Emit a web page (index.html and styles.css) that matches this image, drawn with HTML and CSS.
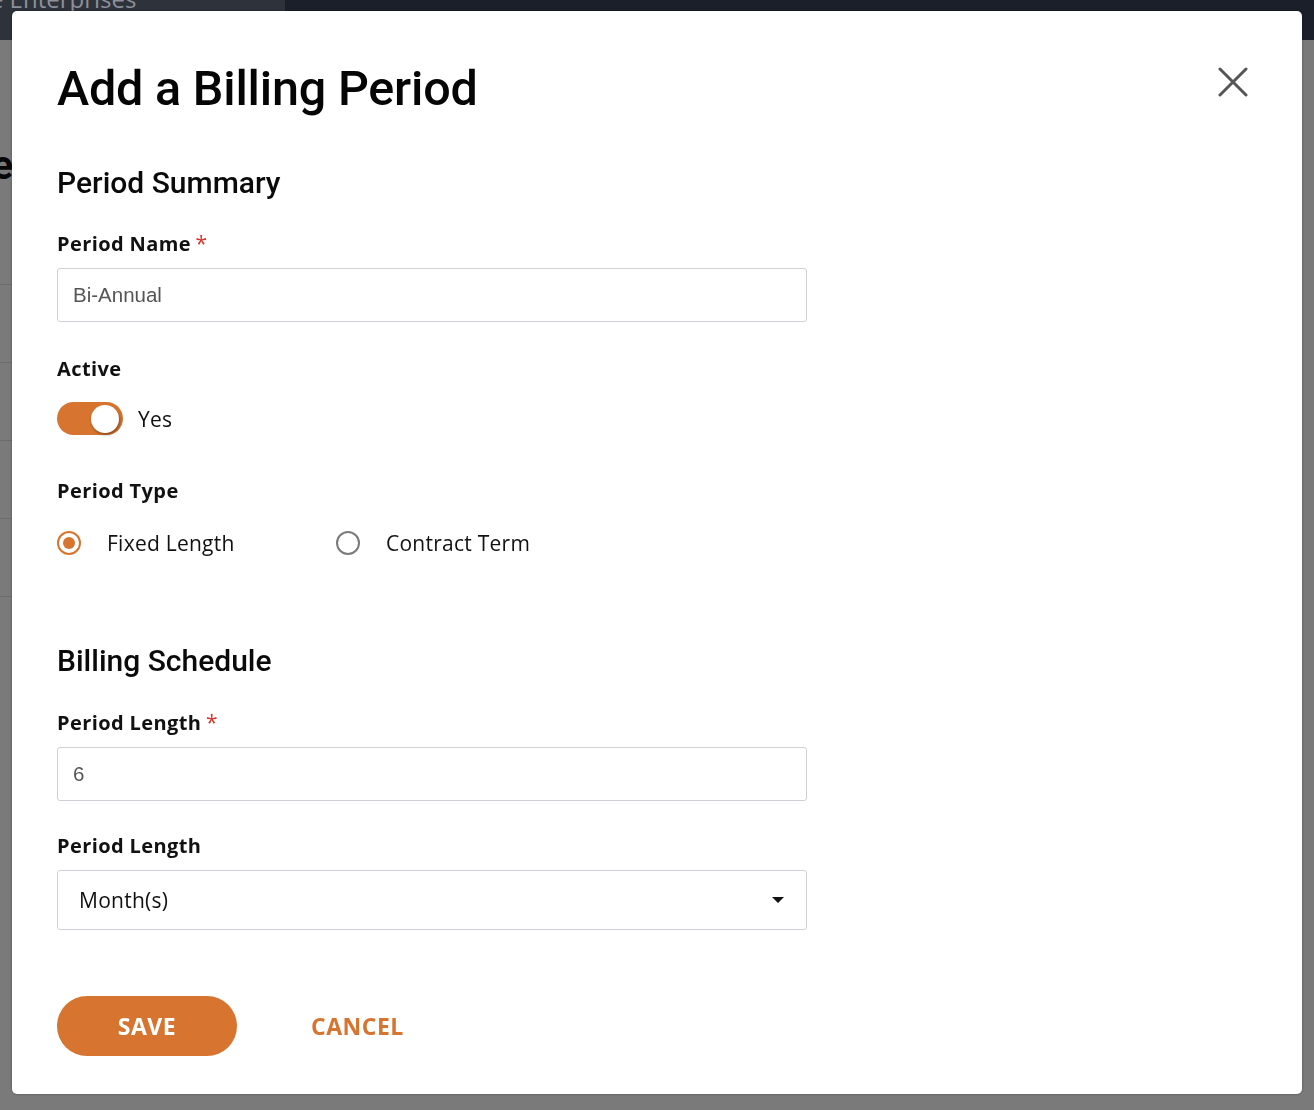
FILE: index.html
```html
<!DOCTYPE html>
<html lang="en">
<head>
<meta charset="utf-8">
<title>Add a Billing Period</title>
<link rel="stylesheet" href="styles.css">
</head>
<body>
<div class="page">
  <header class="topbar">
    <div class="brand"><span class="brand-text">Acme Enterprises</span></div>
  </header>
  <div class="strip">
    <div class="strip-title"><span>Billing Schedule</span></div>
    <div class="strip-rows">
      <div class="strip-row"></div>
      <div class="strip-row"></div>
      <div class="strip-row"></div>
      <div class="strip-row"></div>
      <div class="strip-row"></div>
    </div>
  </div>
</div>

<div class="overlay"></div>

<div class="modal" role="dialog" aria-labelledby="modal-title">
  <div class="modal-head">
    <h1 id="modal-title" class="modal-title">Add a Billing Period</h1>
    <button class="close" aria-label="Close">
      <svg width="30" height="30" viewBox="0 0 30 30"><path d="M2 2 L28 28 M28 2 L2 28" stroke="#555" stroke-width="3" stroke-linecap="round"/></svg>
    </button>
  </div>

  <h2 class="section-title">Period Summary</h2>

  <label class="label label-first">Period Name <span class="req">*</span></label>
  <div class="input"><span class="input-text">Bi-Annual</span></div>

  <label class="label label-gap">Active</label>
  <div class="toggle-row">
    <span class="toggle"><span class="knob"></span></span>
    <span class="option-text">Yes</span>
  </div>

  <label class="label label-type">Period Type</label>
  <div class="radio-row">
    <span class="radio-item">
      <span class="radio radio-on"><span class="dot"></span></span>
      <span class="option-text">Fixed Length</span>
    </span>
    <span class="radio-item">
      <span class="radio"></span>
      <span class="option-text">Contract Term</span>
    </span>
  </div>

  <h2 class="section-title section-second">Billing Schedule</h2>

  <label class="label label-second">Period Length <span class="req">*</span></label>
  <div class="input"><span class="input-text">6</span></div>

  <label class="label label-select">Period Length</label>
  <div class="select">
    <span class="select-text">Month(s)</span>
    <span class="caret"></span>
  </div>

  <div class="actions">
    <button class="btn-save">SAVE</button>
    <button class="btn-cancel">CANCEL</button>
  </div>
</div>
</body>
</html>
```

FILE: styles.css
```css
html, body {
  margin: 0;
  padding: 0;
  height: 100%;
}
body {
  background: #ffffff;
  font-family: "Open Sans", "Liberation Sans", sans-serif;
  overflow: hidden;
}

/* background page */
.page {
  height: 1110px;
}
.topbar {
  height: 40px;
  background: #1b1f29;
  display: flex;
}
.brand {
  width: 285px;
  background: #2d323b;
  border-bottom-right-radius: 2px;
  overflow: hidden;
  position: relative;
}
.brand-text {
  position: absolute;
  left: -59px;
  top: -18px;
  font-size: 24px;
  color: #8d9099;
  white-space: nowrap;
}
.strip {
  width: 12px;
  overflow: hidden;
  background: #fff;
  height: 1070px;
}
.strip-title {
  display: flex;
  justify-content: flex-end;
  margin-top: 102px;
  height: 50px;
}
.strip-title span {
  font-family: "Roboto", sans-serif;
  font-weight: 700;
  font-size: 40px;
  color: #111;
  white-space: nowrap;
  flex-shrink: 0;
  margin-right: -1px;
}
.strip-rows {
  margin-top: 92px;
}
.strip-row {
  height: 77px;
  border-top: 1px solid #e2e2e2;
}

.overlay {
  position: fixed;
  inset: 40px 0 0 0;
  background: rgba(0, 0, 0, 0.52);
}

/* modal */
.modal {
  position: fixed;
  left: 12px;
  top: 11px;
  width: 1290px;
  height: 1083px;
  box-sizing: border-box;
  background: #fff;
  border-radius: 5px;
  box-shadow: 0 0 3px rgba(0, 0, 0, 0.35);
  padding: 50px 45px 0 45px;
  display: flex;
  flex-direction: column;
  align-items: flex-start;
}
.modal-head {
  align-self: stretch;
  display: flex;
  justify-content: space-between;
  align-items: flex-start;
}
.modal-title {
  margin: 0;
  font-family: "Roboto", sans-serif;
  font-weight: 500;
  font-size: 48.5px;
  line-height: 56px;
  color: #050505;
  letter-spacing: -0.2px;
}
.close {
  border: 0;
  background: none;
  padding: 0;
  margin: 6px 9px 0 0;
  width: 30px;
  height: 30px;
  display: block;
}
.close svg { display: block; }

.section-title {
  margin: 48px 0 0 0;
  font-family: "Roboto", sans-serif;
  font-weight: 500;
  font-size: 30px;
  line-height: 36px;
  color: #0a0a0a;
}
.section-second {
  margin-top: 86px;
}

.label {
  display: block;
  font-family: "Open Sans", sans-serif;
  font-weight: 700;
  font-size: 20px;
  line-height: 28px;
  letter-spacing: 0.4px;
  color: #111;
}
.label-first { margin-top: 28px; }
.label-second { margin-top: 29px; }
.label-gap { margin-top: 33px; }
.label-select { margin-top: 31px; }
.label-type { margin-top: 42px; }
.req {
  color: #d9342b;
  font-weight: 400;
  font-size: 21px;
  margin-left: -1px;
  letter-spacing: 0;
}

.input {
  margin-top: 10px;
  width: 750px;
  height: 54px;
  box-sizing: border-box;
  border: 1px solid #cfcfd6;
  border-radius: 3px;
  display: flex;
  align-items: center;
  padding: 0 15px;
}
.input-text {
  font-family: "Liberation Sans", Arial, sans-serif;
  font-size: 20.5px;
  color: #555;
}

.toggle-row {
  margin-top: 19px;
  display: flex;
  align-items: center;
  gap: 15px;
}
.toggle {
  width: 66px;
  height: 33px;
  border-radius: 17px;
  background: #d77430;
  display: flex;
  align-items: center;
  justify-content: flex-end;
  padding-right: 4px;
  box-sizing: border-box;
}
.knob {
  width: 28px;
  height: 28px;
  border-radius: 50%;
  background: #fff;
  box-shadow: 1px 2px 3px rgba(0, 0, 0, 0.35);
}
.option-text {
  font-family: "Open Sans", sans-serif;
  font-size: 21px;
  line-height: 28px;
  letter-spacing: 0.25px;
  color: #111;
}

.radio-row {
  margin-top: 24px;
  display: flex;
  align-items: center;
}
.radio-item {
  display: flex;
  align-items: center;
  gap: 26px;
  width: 279px;
}
.radio {
  width: 24px;
  height: 24px;
  box-sizing: border-box;
  border-radius: 50%;
  border: 2.5px solid #7a7a7a;
  display: flex;
  align-items: center;
  justify-content: center;
}
.radio-on {
  border-color: #d77430;
}
.dot {
  width: 12px;
  height: 12px;
  border-radius: 50%;
  background: #d77430;
}

.select {
  margin-top: 10px;
  width: 750px;
  height: 60px;
  box-sizing: border-box;
  border: 1px solid #cfcfd6;
  border-radius: 3px;
  display: flex;
  align-items: center;
  justify-content: space-between;
  padding: 0 22px 0 21px;
}
.select-text {
  font-family: "Open Sans", sans-serif;
  font-size: 21px;
  letter-spacing: 0.25px;
  color: #111;
}
.caret {
  width: 0;
  height: 0;
  border-left: 6px solid transparent;
  border-right: 6px solid transparent;
  border-top: 6px solid #111;
}

.actions {
  margin-top: 66px;
  display: flex;
  align-items: center;
  gap: 74px;
}
.btn-save {
  width: 180px;
  height: 60px;
  border: 0;
  border-radius: 30px;
  background: #d77430;
  color: #fff;
  font-family: "Open Sans", sans-serif;
  font-weight: 700;
  font-size: 23px;
  letter-spacing: 0.5px;
  padding: 0;
}
.btn-cancel {
  border: 0;
  background: none;
  padding: 0;
  color: #d77430;
  font-family: "Open Sans", sans-serif;
  font-weight: 700;
  font-size: 23px;
  letter-spacing: 0.5px;
}
```
